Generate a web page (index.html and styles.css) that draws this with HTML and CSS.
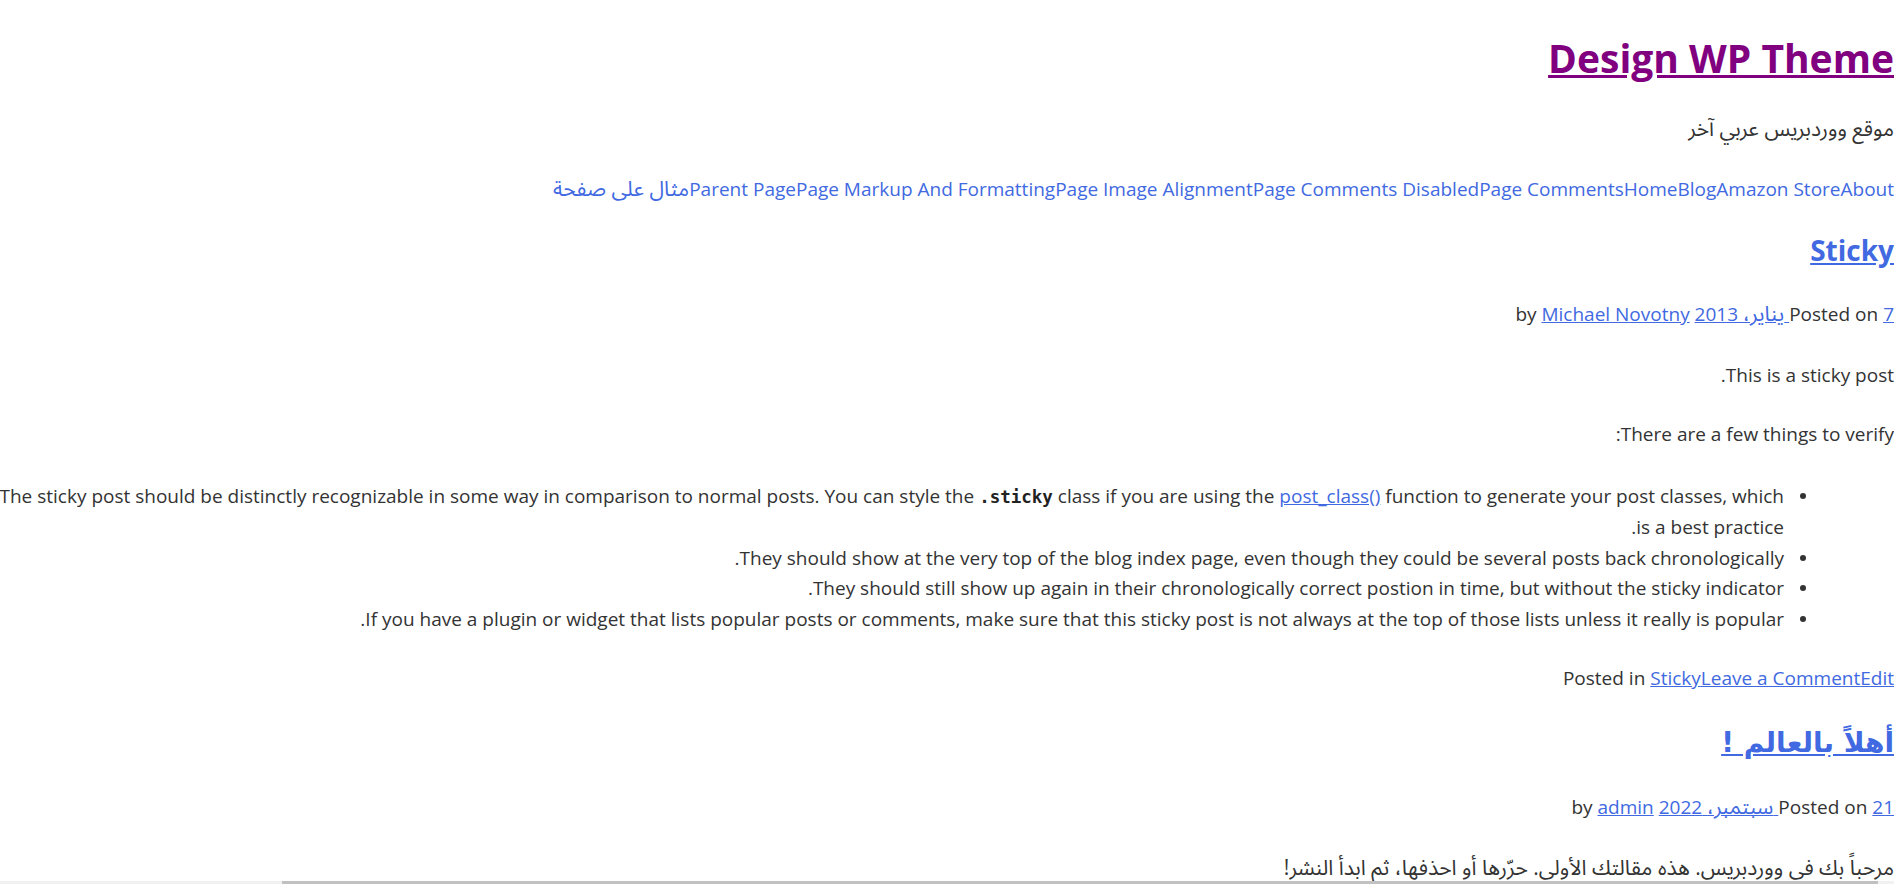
FILE: index.html
```html
<!DOCTYPE html>
<html lang="ar" dir="rtl">
<head>
<meta charset="utf-8">
<title>Design WP Theme</title>
<link rel="stylesheet" href="styles.css">
</head>
<body>
<div class="site">
  <header class="site-header">
    <h1 class="site-title"><a href="#">Design WP Theme</a></h1>
    <p class="site-description"><span class="ar">موقع ووردبريس عربي آخر</span></p>
    <nav class="main-nav">
      <ul class="menu">
        <li><a href="#">About</a></li>
        <li><a href="#">Amazon Store</a></li>
        <li><a href="#">Blog</a></li>
        <li><a href="#">Home</a></li>
        <li><a href="#">Page Comments</a></li>
        <li><a href="#">Page Comments Disabled</a></li>
        <li><a href="#">Page Image Alignment</a></li>
        <li><a href="#">Page Markup And Formatting</a></li>
        <li><a href="#">Parent Page</a></li>
        <li><a href="#" class="ar">مثال على صفحة</a></li>
      </ul>
    </nav>
  </header>

  <main class="site-main">
    <article class="post post-sticky">
      <h2 class="entry-title"><a href="#">Sticky</a></h2>
      <div class="entry-meta"><span class="posted-on">Posted on <a href="#">7 <span class="ar">يناير،</span> 2013</a></span><span class="byline"> by <a href="#">Michael Novotny</a></span></div>
      <div class="entry-content">
        <p>This is a sticky post.</p>
        <p>There are a few things to verify:</p>
        <ul class="checklist">
          <li><span class="item-text">The sticky post should be distinctly recognizable in some way in comparison to normal posts. You can style the <code>.sticky</code> class if you are using the <a href="#">post_class()</a> function to generate your post classes, which is a best practice.</span></li>
          <li><span class="item-text">They should show at the very top of the blog index page, even though they could be several posts back chronologically.</span></li>
          <li><span class="item-text">They should still show up again in their chronologically correct postion in time, but without the sticky indicator.</span></li>
          <li><span class="item-text">If you have a plugin or widget that lists popular posts or comments, make sure that this sticky post is not always at the top of those lists unless it really is popular.</span></li>
        </ul>
      </div>
      <footer class="entry-footer"><span class="cat-links">Posted in <a href="#">Sticky</a></span><span class="comments-link"><a href="#">Leave a Comment</a></span><span class="edit-link"><a href="#">Edit</a></span></footer>
    </article>

    <article class="post post-hello">
      <h2 class="entry-title entry-title-ar"><a href="#">أهلاً بالعالم !</a></h2>
      <div class="entry-meta"><span class="posted-on">Posted on <a href="#">21 <span class="ar">سبتمبر،</span> 2022</a></span><span class="byline"> by <a href="#">admin</a></span></div>
      <div class="entry-content">
        <p><span class="ar">مرحباً بك في ووردبريس. هذه مقالتك الأولى. حرّرها أو احذفها، ثم ابدأ النشر!</span></p>
      </div>
    </article>
  </main>
</div>

<div class="hscroll" aria-hidden="true"><div class="hscroll-thumb"></div></div>
</body>
</html>
```

FILE: styles.css
```css
html {
  overflow: hidden;
  background: #fff;
}

body {
  margin: 0;
  direction: rtl;
  font-family: "Open Sans", "Noto Sans Arabic", "DejaVu Sans", sans-serif;
  font-size: 19px;
  line-height: 30.5px;
  color: #333;
  background: #fff;
}

a {
  color: #4169e1;
}

/* Arabic runs are set a little larger, as the reference's Arabic face is wider.
   A tight line-height keeps them inside the line's strut. */
.ar {
  font-size: 1.11em;
  line-height: 1;
}

/* Header */
.site-title {
  margin: 33px 0 0;
  font-size: 39px;
  line-height: 49px;
  font-weight: 700;
}

.site-title a {
  color: #800080;
}

.site-description {
  margin: 32px 0 0;
}

.menu {
  display: flex;
  list-style: none;
  margin: 29px 0 0;
  padding: 0;
}

.menu a {
  text-decoration: none;
}

/* Posts */
.post-sticky {
  margin-top: 28px;
}

.post-hello {
  margin-top: 31px;
}

.entry-title {
  margin: 0;
  font-size: 28px;
  line-height: 36px;
  font-weight: 700;
}

.entry-title-ar {
  font-family: "DejaVu Sans", "Noto Sans Arabic", sans-serif;
}

.entry-meta {
  margin-top: 31px;
}

.entry-content p {
  margin: 30.5px 0 0;
}

.entry-content p + p {
  margin-top: 28px;
}

.checklist {
  list-style: none;
  margin: 31.5px 0 0 -10px;
  padding: 0 88px 0 0;
}

.checklist li {
  display: flex;
  align-items: flex-start;
}

.checklist li::before {
  content: "";
  flex: none;
  width: 6px;
  height: 6px;
  margin: 12px 0 0 16px;
  border-radius: 50%;
  background: #333;
}

.item-text {
  flex: 1 1 auto;
  min-width: 0;
}

code {
  font-family: "DejaVu Sans Mono", "Liberation Mono", monospace;
  font-size: 17.5px;
  font-weight: 700;
  color: #222;
}

.entry-footer {
  margin-top: 29px;
}

/* Horizontal scrollbar remnant at the bottom edge */
.hscroll {
  position: fixed;
  left: 0;
  right: 0;
  bottom: 0;
  height: 3px;
  background: #f1f1f1;
  direction: ltr;
}

.hscroll-thumb {
  margin-left: 282px;
  width: 1596px;
  height: 3px;
  background: #c1c1c1;
}
```
